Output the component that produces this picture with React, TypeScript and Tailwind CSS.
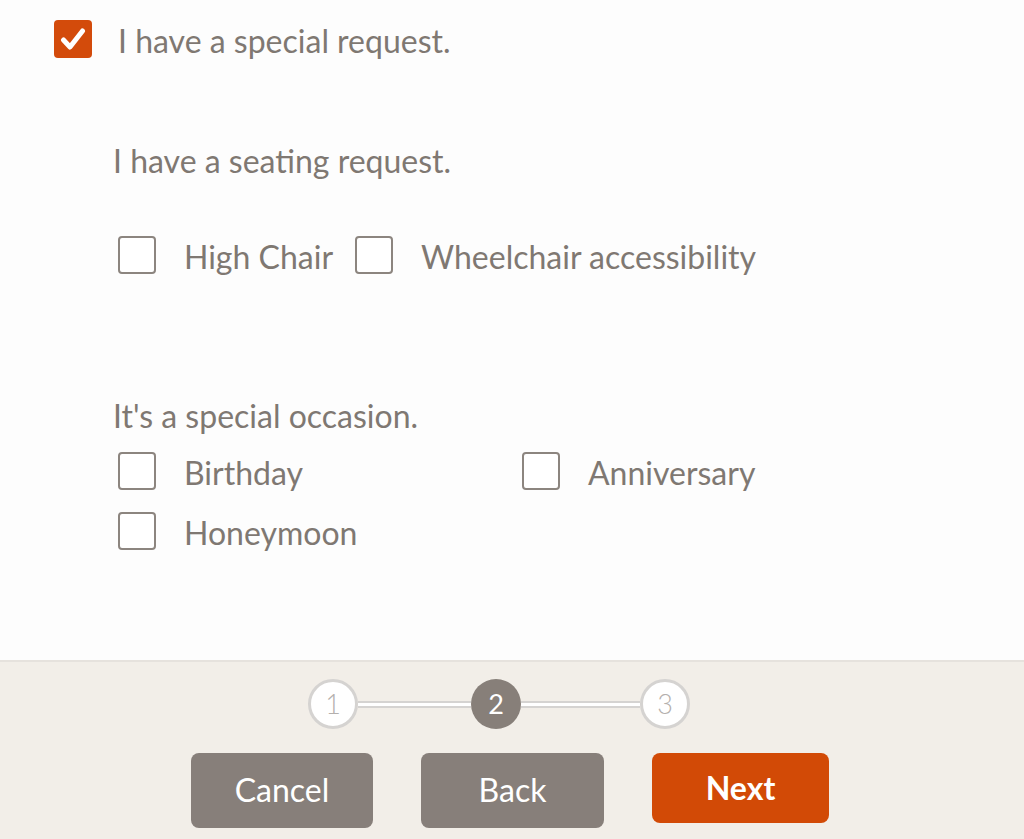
import { useState } from 'react';

type BoxProps = {
  checked?: boolean;
};

function Box({ checked }: BoxProps) {
  if (checked) {
    return (
      <span className="flex h-[38px] w-[38px] shrink-0 items-center justify-center rounded-[4px] bg-[#d34b0b]">
        <svg width="26" height="24" viewBox="0 0 26 24" fill="none">
          <path d="M3.5 13 L10 20 L22.5 4" stroke="#fff" strokeWidth="5" strokeLinecap="round" strokeLinejoin="round" />
        </svg>
      </span>
    );
  }
  return <span className="block h-[38px] w-[38px] shrink-0 rounded-[4px] border-2 border-[#8c857f] bg-white" />;
}

function Option({ label, checked, onToggle }: { label: string; checked: boolean; onToggle: () => void }) {
  return (
    <button type="button" onClick={onToggle} className="flex items-center gap-[28px] text-left">
      <Box checked={checked} />
      <span className="pt-[4px] leading-[34px]">{label}</span>
    </button>
  );
}

function Step({ n, active }: { n: number; active?: boolean }) {
  return (
    <span
      className={
        active
          ? 'flex h-[50px] w-[50px] shrink-0 items-center justify-center rounded-full bg-[#877f79] text-[27px] text-white'
          : 'flex h-[50px] w-[50px] shrink-0 items-center justify-center rounded-full border-[3px] border-[#d5d3d1] bg-white text-[27px] font-light text-[#b4b0ad]'
      }
    >
      {n}
    </span>
  );
}

export default function App() {
  const [checks, setChecks] = useState<Record<string, boolean>>({});
  const toggle = (k: string) => setChecks((c) => ({ ...c, [k]: !c[k] }));

  return (
    <div className="flex h-[839px] w-[1024px] flex-col bg-[#fdfdfd] font-['Lato',sans-serif] text-[32px] leading-[38px] text-[#7f7872]">
      {/* Form */}
      <div className="flex-1 pl-[54px] pt-[20px]">
        <div className="flex items-center gap-[26px]">
          <Box checked />
          <span className="pt-[4px] leading-[34px]">I have a special request.</span>
        </div>

        <div className="pl-[59px]">
          <p className="mt-[84px]">I have a seating request.</p>
          <div className="mt-[56px] flex items-center gap-[22px] pl-[5px]">
            <Option label="High Chair" checked={!!checks.high} onToggle={() => toggle('high')} />
            <Option label="Wheelchair accessibility" checked={!!checks.wheel} onToggle={() => toggle('wheel')} />
          </div>

          <p className="mt-[123px]">It's a special occasion.</p>
          <div className="mt-[17px] grid grid-cols-[404px_1fr] gap-y-[22px] pl-[5px]">
            <Option label="Birthday" checked={!!checks.bday} onToggle={() => toggle('bday')} />
            <Option label="Anniversary" checked={!!checks.anniv} onToggle={() => toggle('anniv')} />
            <Option label="Honeymoon" checked={!!checks.honey} onToggle={() => toggle('honey')} />
          </div>
        </div>
      </div>

      {/* Footer */}
      <div className="h-[179px] border-t-2 border-[#e6e2dd] bg-[#f2eee8]">
        <div className="mt-[17px] flex items-center justify-center pr-[26px]">
          <Step n={1} />
          <span className="h-[7px] w-[113px] border-y-2 border-[#d5d3d1] bg-white" />
          <Step n={2} active />
          <span className="h-[7px] w-[119px] border-y-2 border-[#d5d3d1] bg-white" />
          <Step n={3} />
        </div>
        <div className="mt-[24px] flex items-start justify-center gap-[48px] pr-[4px] text-[32px] text-white">
          <button type="button" className="h-[75px] w-[182px] rounded-[8px] bg-[#877f7a] pb-[2px]">Cancel</button>
          <button type="button" className="h-[75px] w-[183px] rounded-[8px] bg-[#877f7a] pb-[2px]">Back</button>
          <button type="button" className="h-[70px] w-[177px] rounded-[8px] bg-[#d24a06] font-bold">Next</button>
        </div>
      </div>
    </div>
  );
}
